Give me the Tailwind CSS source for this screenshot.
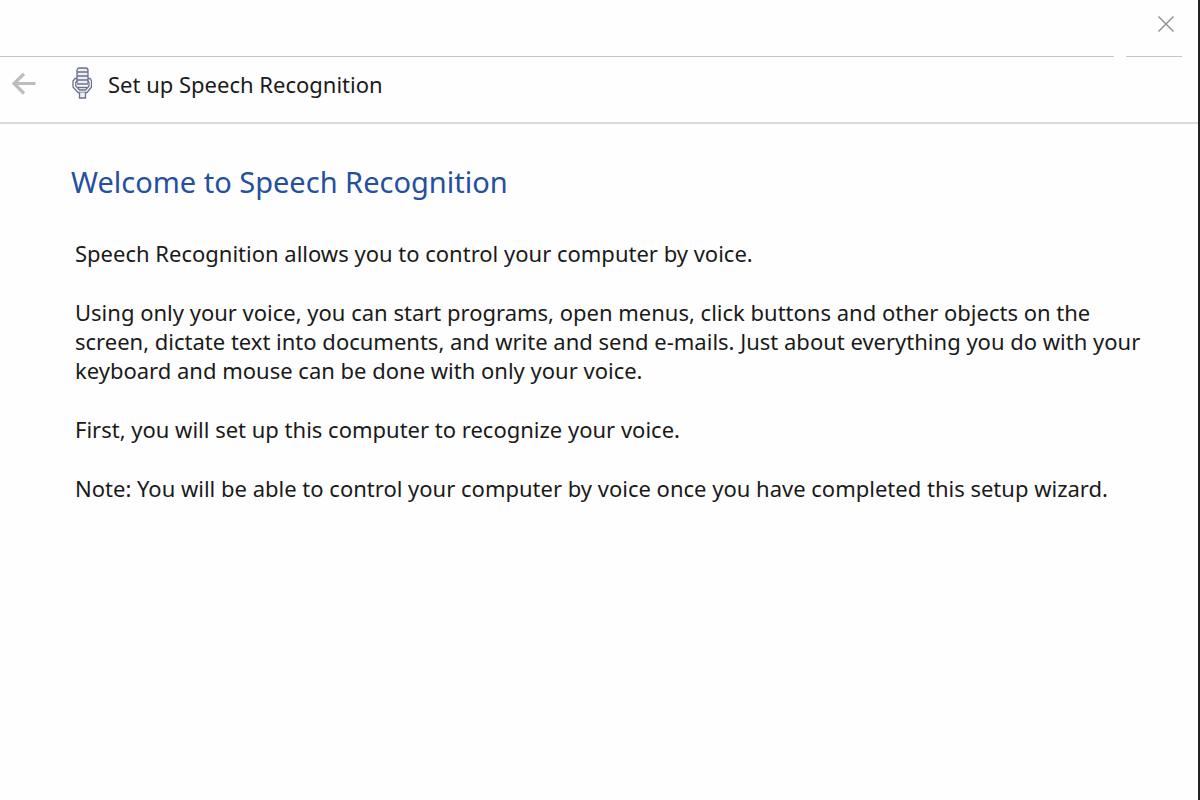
<!DOCTYPE html>
<html lang="en">
  <head>
    <meta charset="UTF-8" />
    <meta name="viewport" content="width=device-width, initial-scale=1.0" />
    <title>Set up Speech Recognition</title>
    <script src="https://cdn.jsdelivr.net/npm/@tailwindcss/browser@4"></script>
  </head>
  <body class="bg-white">
    <div
      class="min-h-screen bg-[#fefefe] border-r-2 border-[#222222] font-['Noto_Sans','Open_Sans',sans-serif] text-[#1a1a1a]"
    >
      <!-- Title bar -->
      <div class="h-14 flex items-start justify-end pt-3 pr-5">
        <button type="button" aria-label="Close" class="p-1">
          <svg class="size-4" viewBox="0 0 16 16" fill="none" stroke="#8c8c8c" stroke-width="1.4">
            <path d="M0.5 0.5L15.5 15.5M15.5 0.5L0.5 15.5" />
          </svg>
        </button>
      </div>
      <div class="flex gap-3 pr-4">
        <div class="h-px grow bg-[#c4c4c4]"></div>
        <div class="h-px w-14 bg-[#c4c4c4]"></div>
      </div>

      <!-- Wizard header -->
      <header class="h-[67px] flex items-start border-b-2 border-[#dadada] pt-2 pl-3">
        <button type="button" aria-label="Back" class="mt-2">
          <svg class="w-6 h-6" viewBox="0 0 24 24" fill="none" stroke="#bdbdbd" stroke-width="3.2">
            <path d="M23.5 10.5H2M12 0.8L2 10.5L12 20.5" />
          </svg>
        </button>
        <svg class="ml-9 mt-0.5 w-5 h-8" viewBox="0 0 20 32" fill="none" stroke="#69718c" stroke-width="1.3">
          <path d="M5 16V3.5Q5 1 7.500 1H13.500Q16 1 16 3.500V16" fill="#eceef4" />
          <path d="M5 5H16M5 9H16M5 13H16M5 17H16M6 20.500H15" />
          <path d="M5 11.500H3L1 14V20L6 25.500H15L19.500 20V14L18 11.500H16" />
          <path d="M5 14L3.800 15.500V19L7.500 23H13.500L17 19V15.500L16 14" />
          <path d="M7.500 25.500V31H13.500V25.500" fill="#eceef4" />
        </svg>
        <span class="ml-4 mt-1 text-[22px] leading-[30px]">Set up Speech Recognition</span>
      </header>

      <!-- Welcome page -->
      <main class="pt-[38px] pl-[75px] pr-8">
        <h1 class="-ml-1 text-[29px] leading-10 text-[#2450a0]">Welcome to Speech Recognition</h1>
        <div class="mt-[37px] flex flex-col gap-[30px] text-[22px] leading-[29px]">
          <p>Speech Recognition allows you to control your computer by voice.</p>
          <p>
            Using only your voice, you can start programs, open menus, click buttons and other objects on the
            <br />screen, dictate text into documents, and write and send e-mails. Just about everything you do with your
            <br />keyboard and mouse can be done with only your voice.
          </p>
          <p>First, you will set up this computer to recognize your voice.</p>
          <p>Note: You will be able to control your computer by voice once you have completed this setup wizard.</p>
        </div>
      </main>
    </div>
  </body>
</html>
